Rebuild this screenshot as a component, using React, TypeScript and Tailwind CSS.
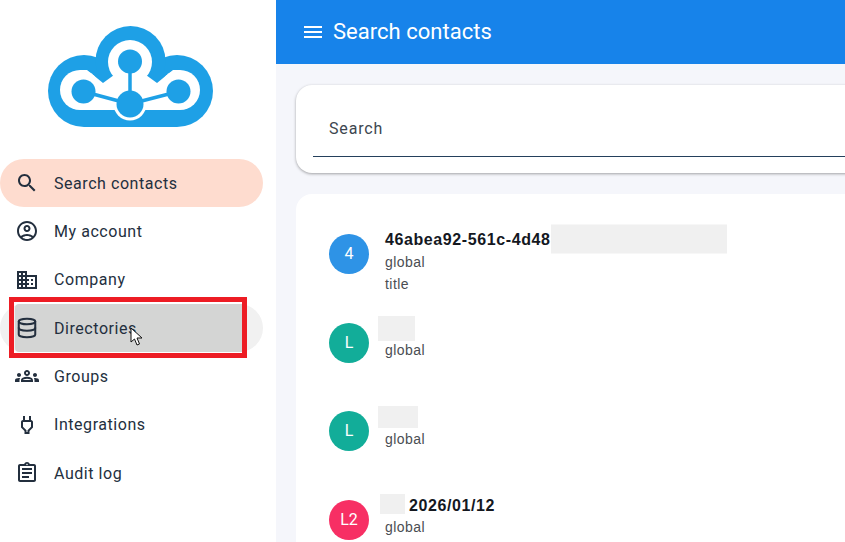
import type { ReactNode } from 'react';
import { Database } from 'lucide-react';

const NAV = [
  { label: 'Search contacts', d: 'M15.5 14h-.79l-.28-.27C15.41 12.59 16 11.11 16 9.5 16 5.91 13.09 3 9.5 3S3 5.91 3 9.5 5.91 16 9.5 16c1.61 0 3.09-.59 4.23-1.57l.27.28v.79l5 4.99L20.49 19l-4.99-5zm-6 0C7.01 14 5 11.99 5 9.5S7.01 5 9.5 5 14 7.01 14 9.5 11.99 14 9.5 14z' },
  { label: 'My account', d: 'M12 2C6.48 2 2 6.48 2 12s4.48 10 10 10 10-4.48 10-10S17.52 2 12 2zM7.35 18.5C8.66 17.56 10.26 17 12 17s3.34.56 4.65 1.5c-1.31.94-2.91 1.5-4.65 1.5s-3.34-.56-4.65-1.5zm10.79-1.38C16.45 15.8 14.32 15 12 15s-4.45.8-6.14 2.12C4.7 15.73 4 13.95 4 12c0-4.42 3.58-8 8-8s8 3.58 8 8c0 1.95-.7 3.73-1.86 5.12zM12 6c-1.93 0-3.5 1.57-3.5 3.5S10.07 13 12 13s3.5-1.57 3.5-3.5S13.93 6 12 6zm0 5c-.83 0-1.5-.67-1.5-1.5S11.17 8 12 8s1.5.67 1.5 1.5S12.83 11 12 11z' },
  { label: 'Company', d: 'M12 7V3H2v18h20V7H12zM6 19H4v-2h2v2zm0-4H4v-2h2v2zm0-4H4V9h2v2zm0-4H4V5h2v2zm4 12H8v-2h2v2zm0-4H8v-2h2v2zm0-4H8V9h2v2zm0-4H8V5h2v2zm10 12h-8v-2h2v-2h-2v-2h2v-2h-2V9h8v10zm-2-8h-2v2h2v-2zm0 4h-2v2h2v-2z' },
  { label: 'Directories', d: '' },
  { label: 'Groups', d: 'M4 13c1.1 0 2-.9 2-2s-.9-2-2-2-2 .9-2 2 .9 2 2 2zm1.13 1.1c-.37-.06-.74-.1-1.13-.1-.99 0-1.93.21-2.78.58C.48 14.9 0 15.62 0 16.43V18h4.5v-1.61c0-.83.23-1.61.63-2.29zM20 13c1.1 0 2-.9 2-2s-.9-2-2-2-2 .9-2 2 .9 2 2 2zm4 3.43c0-.81-.48-1.53-1.22-1.85-.85-.37-1.79-.58-2.78-.58-.39 0-.76.04-1.13.1.4.68.63 1.46.63 2.29V18H24v-1.57zm-7.76-2.78C15.07 13.14 13.63 12.75 12 12.75c-1.63 0-3.07.4-4.24.91C6.68 14.13 6 15.21 6 16.39V18h12v-1.61c0-1.18-.68-2.26-1.76-2.74zM8.07 16c.09-.23.13-.39.91-.69.97-.38 1.99-.56 3.02-.56s2.05.18 3.02.56c.77.3.81.46.91.69H8.07zM12 8c.55 0 1 .45 1 1s-.45 1-1 1-1-.45-1-1 .45-1 1-1m0-2c-1.66 0-3 1.34-3 3s1.34 3 3 3 3-1.34 3-3-1.34-3-3-3z' },
  { label: 'Integrations', d: 'M16 7V3h-2v4h-4V3H8v4h-.01C7 6.99 6 7.99 6 8.99v5.49L9.5 18v3h5v-3l3.5-3.51v-5.5c0-1-1-2-2-2zm0 6.66l-3.5 3.51V19h-1v-1.83L8 13.65v-4.66h8v4.67z' },
  { label: 'Audit log', d: 'M19 3h-4.18C14.4 1.84 13.3 1 12 1s-2.4.84-2.82 2H5c-1.1 0-2 .9-2 2v14c0 1.1.9 2 2 2h14c1.1 0 2-.9 2-2V5c0-1.1-.9-2-2-2zm-7-.25c.22 0 .41.1.55.25.12.13.2.31.2.5 0 .41-.34.75-.75.75s-.75-.34-.75-.75c0-.19.08-.37.2-.5.14-.15.33-.25.55-.25zM19 19H5V5h14v14zM7 15h7v2H7zm0-4h10v2H7zm0-4h10v2H7z' },
];

function Logo() {
  return (
    <svg width="165" height="101" viewBox="48 26 165 101">
      {/* cloud */}
      <g fill="#1ea0e6">
        <circle cx="84" cy="91" r="36" />
        <circle cx="177" cy="91" r="36" />
        <circle cx="130.5" cy="61" r="35" />
        <rect x="84" y="70" width="93" height="57" />
      </g>
      {/* white channel */}
      <g fill="#fff">
        <circle cx="80" cy="90" r="20" />
        <circle cx="180" cy="90" r="20" />
        <circle cx="130" cy="62" r="22" />
        <circle cx="130" cy="104" r="16.5" />
        <polygon points="80,70 87,70 103,83 114,75 130,66 146,75 157,83 173,70 180,70 180,110 80,110" />
      </g>
      {/* nodes */}
      <g fill="#1ea0e6" stroke="#1ea0e6">
        <line x1="83.5" y1="91.5" x2="130" y2="104" strokeWidth="3.5" />
        <line x1="178.5" y1="91.5" x2="130" y2="104" strokeWidth="3.5" />
        <line x1="130" y1="61.5" x2="130" y2="104" strokeWidth="3.5" />
        <circle cx="83.5" cy="91.5" r="12" strokeWidth="0" />
        <circle cx="178.5" cy="91.5" r="12" strokeWidth="0" />
        <circle cx="130" cy="61.5" r="12" strokeWidth="0" />
        <circle cx="130" cy="104" r="13.5" strokeWidth="0" />
      </g>
    </svg>
  );
}

function NavRow({ label, d }: { label: string; d: string }) {
  const active = label === 'Search contacts';
  const hovered = label === 'Directories';
  return (
    <div
      className={`relative flex items-center h-[48.33px] w-[263px] pl-[15px] rounded-[24px] text-[16px] tracking-[0.55px] text-[#232f3e] ${
        active ? 'bg-[#fedccf]' : hovered ? 'bg-[#f1f1f1]' : ''
      }`}
    >
      {hovered && (
        <>
          <div className="absolute left-[15px] top-0 bottom-0 w-[228px] bg-[#d4d5d4] rounded-l-[4px]" />
          <div className="absolute left-[9px] top-[-7px] w-[238px] h-[61px] border-[5px] border-[#ed1c24]" />
        </>
      )}
      <span className="relative flex w-[24px] h-[24px] items-center justify-center">
        {hovered ? (
          <Database size={22} strokeWidth={2.2} color="#232f3e" />
        ) : (
          <svg width="24" height="24" viewBox="0 0 24 24" fill="#232f3e">
            <path d={d} />
          </svg>
        )}
      </span>
      <span className="relative ml-[15px] pt-[1px]">{label}</span>
      {hovered && (
        <svg className="absolute left-[130px] top-[23px]" width="14" height="20" viewBox="0 0 14 20">
          <path d="M1 1v14l3.5-3 2.5 6 2.5-1-2.5-6H12z" fill="#fff" stroke="#111" strokeWidth="1" />
        </svg>
      )}
    </div>
  );
}

function Avatar({ text, color }: { text: string; color: string }) {
  return (
    <div className={`flex h-10 w-10 shrink-0 items-center justify-center rounded-full text-[16px] text-white ${color}`}>
      {text}
    </div>
  );
}

function Contact({ avatar, color, name, lines }: { avatar: string; color: string; name: ReactNode; lines: string[] }) {
  return (
    <div className="flex h-[88.5px] items-start gap-4 pl-[33px] pt-[24px]">
      <Avatar text={avatar} color={color} />
      <div className="mt-[-5px] font-['Liberation_Sans',sans-serif]">
        <div className="flex h-[22px] items-center whitespace-nowrap text-[16px] font-bold tracking-[0.6px] text-[#14181f]">{name}</div>
        {lines.map((l) => (
          <div key={l} className="flex h-[22px] items-center text-[14px] tracking-[0.45px] text-[#4a4d52]">
            {l}
          </div>
        ))}
      </div>
    </div>
  );
}

export default function App() {
  return (
    <div className="flex h-[542px] w-[845px] overflow-hidden bg-[#f5f6fb] font-['Roboto',sans-serif]">
      <aside className="h-full w-[276px] shrink-0 bg-white">
        <div className="h-[159px] pl-[48px] pt-[26px]">
          <Logo />
        </div>
        {NAV.map((n) => (
          <NavRow key={n.label} label={n.label} d={n.d} />
        ))}
      </aside>

      <main className="min-w-0 flex-1">
        <header className="flex h-[64px] items-center gap-[8px] bg-[#1783ea] pb-[1px] pl-[25px] text-white">
          <svg width="24" height="24" viewBox="0 0 24 24" fill="#fff">
            <path d="M3 18h18v-2H3v2zm0-5h18v-2H3v2zm0-7v2h18V6H3z" />
          </svg>
          <span className="text-[22px] font-[450] tracking-[0.03px]">Search contacts</span>
        </header>

        <div className="ml-[20px] mt-[21px] h-[88px] w-[640px] rounded-[16px] bg-white px-[17px] pt-[16px] shadow-[0_1px_3px_rgba(0,0,0,0.35)]">
          <div className="flex h-[56px] items-center border-b border-[#24405c] pl-[16px] text-[16px] tracking-[0.85px] text-[#3d4650]">
            Search
          </div>
        </div>

        <div className="ml-[20px] mt-[21px] h-[400px] w-[640px] rounded-[16px] bg-white pt-[16px]">
          <Contact
            avatar="4"
            color="bg-[#2e93e6]"
            name={
              <>
                46abea92-561c-4d48
                <span className="h-[29px] w-[176px] shrink-0 -translate-y-[1.5px] bg-[#f0f0f0]" />
              </>
            }
            lines={['global', 'title']}
          />
          <Contact
            avatar="L"
            color="bg-[#12ad99]"
            name={<span className="ml-[-7px] h-[25px] w-[37px] bg-[#f0f0f0]" />}
            lines={['global']}
          />
          <Contact
            avatar="L"
            color="bg-[#12ad99]"
            name={<span className="ml-[-7px] h-[22px] w-[40px] bg-[#f0f0f0]" />}
            lines={['global']}
          />
          <Contact
            avatar="L2"
            color="bg-[#f72f64]"
            name={
              <>
                <span className="ml-[-5px] h-[20px] w-[25px] -translate-y-[2px] bg-[#f0f0f0]" />
                <span className="ml-[4px]">2026/01/12</span>
              </>
            }
            lines={['global']}
          />
        </div>
      </main>
    </div>
  );
}
